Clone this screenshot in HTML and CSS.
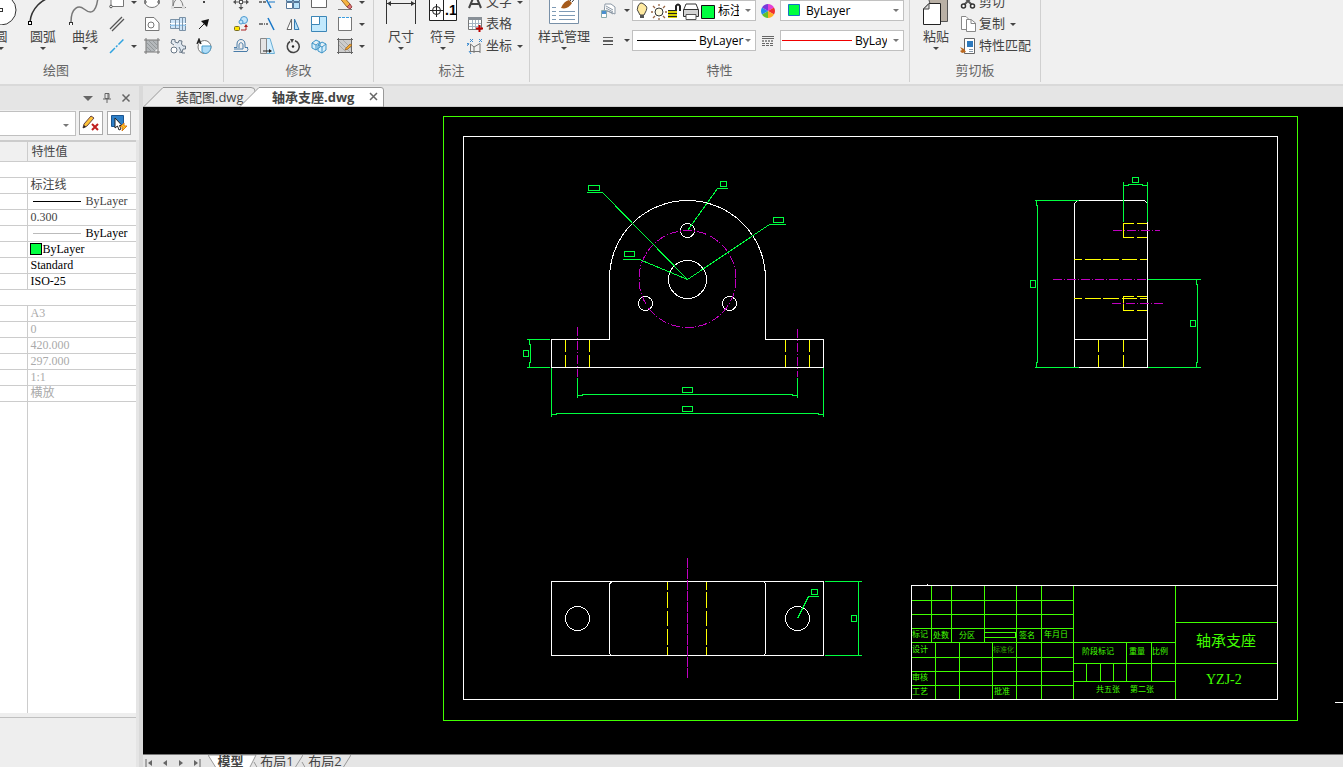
FILE: index.html
```html
<!DOCTYPE html>
<html lang="zh-CN">
<head>
    <meta charset="UTF-8">
    <title>轴承支座.dwg</title>
    <link rel="stylesheet" href="styles.css">
</head>
<body>
    <header class="ribbon">
        <section class="group group-draw">
            <div class="tools">
                <button class="big"><svg width="42" height="34" viewBox="0 0 42 34"><circle cx="21" cy="19" r="15" fill="#fff" stroke="#333"/><rect x="19.500" y="17.500" width="3" height="3" fill="#fff" stroke="#333"/></svg><span>圆</span><i class="arrow"></i></button>
                <button class="big"><svg width="42" height="34" viewBox="0 0 42 34"><path d="M8 31C9 18 20 7 32 6" fill="none" stroke="#333" stroke-width="1.500"/><rect x="6.500" y="30.500" width="3" height="3" fill="#fff" stroke="#000"/></svg><span>圆弧</span><i class="arrow"></i></button>
                <button class="big"><svg width="42" height="34" viewBox="0 0 42 34"><path d="M7 31C7 16 15 14 20 18S32 25 34 6" fill="none" stroke="#777" stroke-width="1.500"/><rect x="5.500" y="31.500" width="3" height="3" fill="#fff" stroke="#333"/></svg><span>曲线</span><i class="arrow"></i></button>
                <div class="icons icons-draw">
                    <button aria-label="矩形"><svg class="ico" viewBox="0 0 16 16"><path d="M2 2H14.500V12.500H2Z" fill="#fff" stroke="#777"/><circle cx="2" cy="12.500" r="1.300" fill="#fff" stroke="#555"/></svg></button>
                    <i class="arrow"></i>
                    <button aria-label="椭圆"><svg class="ico" viewBox="0 0 16 16"><ellipse cx="8" cy="8" rx="7" ry="5.500" fill="#fff" stroke="#777"/><path d="M0 7h2v2H0zM14 7h2v2h-2z" fill="#fff" stroke="#555"/></svg></button>
                    <button aria-label="圆锥"><svg class="ico" viewBox="0 0 16 16"><path d="M3 1V13.500H16M3 13.500C3 8 6 5 8 5S13 8 13 13.500" fill="none" stroke="#777"/><path d="M1 12h3v3H1zM12 12h3v3h-3z" fill="#ddd" stroke="none"/></svg></button>
                    <button aria-label="点"><svg class="ico" viewBox="0 0 16 16"><path d="M7 7h2v2H7z" fill="#444"/></svg></button>
                    <button aria-label="双线"><svg class="ico" viewBox="0 0 16 16"><path d="M1 13L13 1M3 15L15 3" stroke="#555" stroke-width="1.300"/></svg></button>
                    <i></i>
                    <button aria-label="面域"><svg class="ico" viewBox="0 0 16 16"><path d="M1.500 1.500H10L15 7V14.500H1.500Z" fill="#fff" stroke="#777"/><circle cx="7" cy="9" r="3" fill="#fff" stroke="#777"/></svg></button>
                    <button aria-label="轴"><svg class="ico" viewBox="0 0 16 16"><path d="M.5 3.500H9.500V1.500H15.500V14.500H9.500V12.500H.5Z" fill="#cfe5f8" stroke="#7b92a7"/><path d="M0 7.500H16" stroke="#fff"/><path d="M0 9.500H16" stroke="#8fc6ee"/><path d="M5.500 4V12M9.500 2V14M12.500 2V14" stroke="#7b92a7"/></svg></button>
                    <button aria-label="箭头"><svg class="ico" viewBox="0 0 16 16"><path d="M3 13L9 7" stroke="#222"/><path d="M13 3L11 11 5 5Z" fill="#111"/></svg></button>
                    <button aria-label="中心线"><svg class="ico" viewBox="0 0 16 16"><path d="M1 15L15 1" stroke="#2fa3e0" stroke-width="1.500" stroke-dasharray="7 1.500 2 1.500"/></svg></button>
                    <i class="arrow"></i>
                    <button aria-label="填充"><svg class="ico" viewBox="0 0 16 16"><path d="M2 2H14V10L10 14H2Z" fill="#b4b8bb"/><path d="M2 0V16M14 0V16M0 2H16M0 14H16" stroke="#777"/><path d="M3 5L11 13M5 3L13 11M3 9L7 13M9 3L13 7" stroke="#85898d" stroke-width=".7"/></svg></button>
                    <button aria-label="齿轮"><svg class="ico" viewBox="0 0 16 16"><path d="M2 1.500H5V4L8 5 9 2.500 12 3 11.500 6 13 8H15.500V11H13L12 14.500 9 14M2 1.500L1 5 4 7" fill="#dfe7ef" stroke="#687786"/><circle cx="4" cy="12" r="3" fill="#fff" stroke="#687786"/><path d="M9 9l3 6h3" fill="none" stroke="#687786"/></svg></button>
                    <button aria-label="局部放大"><svg class="ico" viewBox="0 0 16 16"><circle cx="8.500" cy="9" r="6.500" fill="#fff" stroke="#777"/><path d="M6 8H15C15 13 12 15.500 9 15.500L6 14Z" fill="#aedcf8" stroke="#4a9cc9"/><path d="M1 6L3 1 5 6M2 4H4" fill="none" stroke="#222" stroke-width="1.300"/></svg></button>
                </div>
            </div>
            <h2>绘图</h2>
        </section>

        <section class="group group-modify">
            <div class="tools">
                <div class="icons icons-modify">
                    <button aria-label="移动"><svg class="ico" viewBox="0 0 16 16"><path d="M8 0l2.500 3h-5zM8 16l2.500-3h-5zM0 8l3-2.500v5zM16 8l-3-2.500v5z" fill="#555"/><path d="M8 3V6M8 10V13M3 8H6M10 8H13" stroke="#555"/><rect x="6.500" y="6.500" width="3" height="3" fill="#fff" stroke="#555"/></svg></button>
                    <button aria-label="修剪"><svg class="ico" viewBox="0 0 16 16"><path d="M0 8H8" stroke="#555" stroke-width="1.500" stroke-dasharray="3 1"/><path d="M5 1L12 14" stroke="#1978c8" stroke-width="1.500"/><path d="M10 8H16" stroke="#1978c8"/></svg></button>
                    <button aria-label="阵列"><svg class="ico" viewBox="0 0 16 16"><path d="M1.500 1.500h6v6h-6zM8.500 1.500h6v6h-6zM8.500 8.500h6v6h-6z" fill="#b8e2fa" stroke="#579"/><path d="M1.500 8.500h6v6h-6z" fill="#fff" stroke="#579"/></svg></button>
                    <button aria-label="拉伸"><svg class="ico" viewBox="0 0 16 16"><path d="M.5 1.500H15.500V13.500H.5Z" fill="#fff" stroke="#666"/></svg></button>
                    <button aria-label="删除"><svg class="ico" viewBox="0 0 16 16"><path d="M1 2L4 0 13 10 10 13Z" fill="#f5b342" stroke="#9a672a"/><path d="M10 13L13 10 15 13 13 15Z" fill="#d77" stroke="#944"/><path d="M1 15.500H15" stroke="#777"/></svg></button>
                    <i class="arrow"></i>
                    <button aria-label="复制"><svg class="ico" viewBox="0 0 16 16"><circle cx="11" cy="4" r="3.500" fill="#c5e6fa" stroke="#4a98d0"/><circle cx="8" cy="6" r="2" fill="#c5e6fa" stroke="#4a98d0"/><rect x="1.500" y="10.500" width="5" height="4" rx="1" fill="#ffe500" stroke="#776b22"/><path d="M8 14H13V10" fill="none" stroke="#a22"/><path d="M11 11l2-3 2 3z" fill="#a22"/></svg></button>
                    <button aria-label="延伸"><svg class="ico" viewBox="0 0 16 16"><path d="M0 8H9" stroke="#555" stroke-width="1.500" stroke-dasharray="4 1 1 1"/><path d="M9 2L15 14" stroke="#1978c8" stroke-width="1.500"/></svg></button>
                    <button aria-label="镜像"><svg class="ico" viewBox="0 0 16 16"><path d="M6.500 3V13.500H2Z" fill="#fff" stroke="#666"/><path d="M9.500 3V13.500H14Z" fill="#b8e2fa" stroke="#347ab0"/></svg></button>
                    <button aria-label="缩放"><svg class="ico" viewBox="0 0 16 16"><path d="M.5 .5H15.500V15.500H.5Z" fill="#c2e9fd" stroke="#3c86b7"/><path d="M.5 .5H8.500V8.500H.5Z" fill="#fff" stroke="#3c86b7"/></svg></button>
                    <button aria-label="打断"><svg class="ico" viewBox="0 0 16 16"><path d="M1 1.500H15V14.500H1Z" fill="#fff"/><path d="M1 1.500H15" stroke="#3c9ee0" stroke-dasharray="3 1"/><path d="M1.500 1V14.500H14.500V1" fill="none" stroke="#777"/></svg></button>
                    <i class="arrow"></i>
                    <button aria-label="偏移"><svg class="ico" viewBox="0 0 16 16"><path d="M1 9.500H4V6C4 0 12 0 12 6V9.500H15M.5 13.500H14Q16 11 14 9.500M6 10V7C6 4 10 4 10 7V11H1" fill="none" stroke="#4a7ca8"/></svg></button>
                    <button aria-label="拉长"><svg class="ico" viewBox="0 0 16 16"><path d="M7 .5H11L15.500 15.500H7Z" fill="#d3efff" stroke="#6aaed4"/><path d="M1.500 .5H7.500V15.500H1.500Z" fill="#e4e4e4" stroke="#888"/><path d="M4 13H11" stroke="#222"/><path d="M10 11l3 2-3 2z" fill="#222"/></svg></button>
                    <button aria-label="旋转"><svg class="ico" viewBox="0 0 16 16"><path d="M5 3.500A6 6 0 1 0 10 2.800" fill="none" stroke="#444" stroke-width="1.500"/><path d="M5 1H9L7 5Z" fill="#444"/><circle cx="8" cy="8.500" r="1.200" fill="#222"/></svg></button>
                    <button aria-label="块"><svg class="ico" viewBox="0 0 16 16"><path d="M1 5l4-3 4 2v5l-4 3-4-2zM7 7l4-3 4 2v6l-4 3-4-2zM1 5l4 2 4-3M7 7l4 2 4-3M5 7v5M11 9v6" fill="#d5effd" stroke="#3e93c6"/></svg></button>
                    <button aria-label="填充编辑"><svg class="ico" viewBox="0 0 16 16"><path d="M2 2H14V14H2Z" fill="#ccc"/><path d="M1.500 0V16M14.500 0V16M0 1.500H16M0 14.500H16" stroke="#666"/><path d="M2 7L9 14M2 3L13 14M6 2L14 10" stroke="#999" stroke-width=".7"/><path d="M9 10l4-4 2 1-4 4-3 1z" fill="#f0a830" stroke="#965b1c" stroke-width=".7"/></svg></button>
                    <i class="arrow"></i>
                </div>
            </div>
            <h2>修改</h2>
        </section>

        <section class="group group-note">
            <div class="tools">
                <button class="big"><svg width="42" height="34" viewBox="0 0 42 34"><path d="M6.500 0V33M35.500 0V33M7 12.500H35" stroke="#333" fill="none"/><path d="M7 12.500l4-2.500v5zM35 12.500l-4-2.500v5z" fill="#333"/></svg><span>尺寸</span><i class="arrow"></i></button>
                <button class="big"><svg width="42" height="34" viewBox="0 0 42 34"><path d="M7.500 4H34.500V29.500H7.500ZM21.500 4V30" fill="#fff" stroke="#222"/><circle cx="14.500" cy="19.500" r="4" fill="none" stroke="#222"/><path d="M8 19.500H21M14.500 13V26" stroke="#222"/><text x="23" y="24" class="tenth">.1</text></svg><span>符号</span><i class="arrow"></i></button>
                <div class="rows">
                    <button><svg class="ico" viewBox="0 0 16 16"><path d="M2 14L7 2H9L14 14M4 10H12" fill="none" stroke="#444" stroke-width="2"/></svg><span>文字</span><i class="arrow"></i></button>
                    <button><svg class="ico" viewBox="0 0 16 16"><path d="M1.500 1.500H14.500V13.500H1.500Z" fill="#fff" stroke="#777"/><path d="M1 1H15V4H1Z" fill="#888f96"/><path d="M2 7.500H14M2 10.500H14M5.500 4V13M8.500 4V13M11.500 4V13" stroke="#a5b5c5"/><path d="M12.500 9V16M9 12.500H16" stroke="#b00" stroke-width="2"/></svg><span>表格</span></button>
                    <button><svg class="ico" viewBox="0 0 16 16"><path d="M3.500 6V13.500M3.500 6L7 9 13 5.500V15M7 9V15M3 13.500H13" stroke="#777" fill="none"/><path d="M3 1l3 3M6 1L3 4M12 1l3 3M15 1l-3 3M0 5l2 2M0 8l2-3M2 13l2 3" stroke="#3c8bd0"/></svg><span>坐标</span><i class="arrow"></i></button>
                </div>
            </div>
            <h2>标注</h2>
        </section>

        <section class="group group-props">
            <div class="tools">
                <button class="big wide"><svg width="42" height="34" viewBox="0 0 42 34"><path d="M6.500 2H35.500V32.500H6.500Z" fill="#fff" stroke="#7890a8"/><path d="M9 16.500H13M9 20.500H13M9 24.500H13M9 28.500H13M16 20.500H32M16 24.500H32M16 28.500H32" stroke="#7d9ab5"/><path d="M18 17Q21 10 26 9L29 12Q25 19 18 17Z" fill="#a65b1c"/><path d="M27 10L34 2M29 11L35 4" stroke="#333"/></svg><span>样式管理</span><i class="arrow"></i></button>
                <div class="fields">
                    <button class="drop" aria-label="图层"><svg class="ico" viewBox="0 0 16 16"><path d="M5 1H11L15 4V11L8 8 4 10Z" fill="#fff" stroke="#8b98a5"/><path d="M6 3l7 4M6 5l7 4M6 7l7 4" stroke="#8b98a5"/><path d="M1.500 7.500H6.500V14.500H1.500Z" fill="#fff" stroke="#8aa"/><path d="M2 8h4v3H2z" fill="#4a8fd0"/></svg><i class="arrow"></i></button>
                    <div class="combo combo-layer">
                        <select aria-label="当前图层"><option>标注线</option></select>
                        <svg class="over" width="82" height="20" viewBox="0 0 82 20"><path d="M6 12Q3 9 5 5T9 2 13 5 12 12L11 14H7Z" fill="#ffeaa0" stroke="#444"/><path d="M7 14h4v3H7z" fill="#555"/><circle cx="26" cy="11" r="4" fill="#fffbe0" stroke="#333"/><path d="M26 3V5M26 17V19M18 11H20M32 11H34M20 5l2 2M32 5l-2 2M20 17l2-2M32 17l-2-2" stroke="#964" stroke-width="1.300"/><path d="M35 9H44V17H35Z" fill="#d8d000"/><path d="M35 9.500H44M35 12.500H44M35 15.500H44" stroke="#222"/><path d="M43 10V5Q45 2 47 5V10" fill="none" stroke="#222" stroke-width="2"/><path d="M53 3H63L65 8V12H51V8Z" fill="#fff" stroke="#333"/><path d="M50.500 8.500H65.500V15.500H50.500Z" fill="#d4d4d4" stroke="#333"/><path d="M53 13.500H63V18.500H53Z" fill="#fff" stroke="#555"/><path d="M68.500 4.500H81.500V17.500H68.500Z" fill="#00ff40" stroke="#111"/></svg>
                        <i class="arrow"></i>
                    </div>
                    <svg class="ico mid" viewBox="0 0 16 16"><g transform="translate(8 8)"><path d="M0 0V-7A7 7 0 0 1 6-3.500Z" fill="#e33fd5"/><path d="M0 0L6-3.500A7 7 0 0 1 6 3.500Z" fill="#ef3030"/><path d="M0 0L6 3.500A7 7 0 0 1 0 7Z" fill="#ffad24"/><path d="M0 0V7A7 7 0 0 1-6 3.500Z" fill="#65c22d"/><path d="M0 0L-6 3.500A7 7 0 0 1-6-3.500Z" fill="#218bef"/><path d="M0 0L-6-3.500A7 7 0 0 1 0-7Z" fill="#7a38da"/></g></svg>
                    <div class="combo combo-color">
                        <select aria-label="颜色"><option>ByLayer</option></select>
                        <svg class="over" width="22" height="20" viewBox="0 0 22 20"><path d="M7.500 3.500H18.500V14.500H7.500Z" fill="#00ff40" stroke="#1672c4"/></svg>
                        <i class="arrow"></i>
                    </div>
                    <button class="drop" aria-label="线型"><svg class="ico" viewBox="0 0 16 16"><path d="M3 4.500H13" stroke="#666"/><path d="M3 8H13" stroke="#333" stroke-width="1.500"/><path d="M3 11.500H13" stroke="#444" stroke-width="1"/></svg><i class="arrow"></i></button>
                    <div class="combo combo-line">
                        <select aria-label="当前线型"><option>ByLayer</option></select>
                        <svg class="over" width="64" height="20" viewBox="0 0 64 20"><path d="M4 9.500H63" stroke="#000"/></svg>
                        <i class="arrow"></i>
                    </div>
                    <svg class="ico mid" viewBox="0 0 16 16"><path d="M2 3.500H14M2 5.500H14" stroke="#666"/><path d="M2 8H14" stroke="#333" stroke-dasharray="2 1"/><path d="M2 10.500H14M2 12.500H14" stroke="#666" stroke-dasharray="3 1"/></svg>
                    <div class="combo combo-weight">
                        <select aria-label="线宽"><option>ByLayer</option></select>
                        <svg class="over" width="74" height="20" viewBox="0 0 74 20"><path d="M1 9.500H71" stroke="#f00000"/></svg>
                        <i class="arrow"></i>
                    </div>
                </div>
            </div>
            <h2>特性</h2>
        </section>

        <section class="group group-clip">
            <div class="tools">
                <button class="big"><svg width="42" height="34" viewBox="0 0 42 34"><path d="M12 2H32.500V30.500H20Z" fill="#b9b0a5" stroke="#555"/><path d="M14 12.500H25.500V33.500H8.500V18Z" fill="#fff" stroke="#222"/><path d="M8.500 18H14V12.500Z" fill="#ddd" stroke="#444"/></svg><span>粘贴</span><i class="arrow"></i></button>
                <div class="rows">
                    <button><svg class="ico" viewBox="0 0 16 16"><path d="M4 3L12 11M12 3L4 11" stroke="#555" stroke-width="2"/><circle cx="3.500" cy="12" r="2" fill="#fff" stroke="#333" stroke-width="1.500"/><circle cx="12.500" cy="12" r="2" fill="#fff" stroke="#333" stroke-width="1.500"/></svg><span>剪切</span></button>
                    <button><svg class="ico" viewBox="0 0 16 16"><path d="M1.500 .5H6L9.500 4V13.500H1.500Z" fill="#fff" stroke="#888"/><path d="M6.500 3.500H11L15.500 7V15.500H6.500Z" fill="#fff" stroke="#888"/><path d="M11 3.500V7.500H15" fill="none" stroke="#888"/></svg><span>复制</span><i class="arrow"></i></button>
                    <button><svg class="ico" viewBox="0 0 16 16"><path d="M4.500 .5H14.500V15.500H4.500Z" fill="#fff" stroke="#666"/><path d="M7 3H13V9H7Z" fill="#2c79bd"/><path d="M9 11.500H13M9 13.500H13" stroke="#89a"/><path d="M0 9L4 11 6 14 2 15 0 13 2 12Z" fill="#bb681f"/></svg><span>特性匹配</span></button>
                </div>
            </div>
            <h2>剪切板</h2>
        </section>
    </header>

    <main class="work">
        <aside class="panel">
            <div class="panel-head">
                <button aria-label="菜单"><svg width="10" height="10" viewBox="0 0 10 10"><path d="M0 3H10L5 8Z" fill="#666"/></svg></button>
                <button aria-label="固定"><svg width="10" height="10" viewBox="0 0 10 10"><path d="M3 .5H7V5.500H3ZM1 6H9M5 6V10M6 1V5" fill="none" stroke="#666"/></svg></button>
                <button aria-label="关闭"><svg width="10" height="10" viewBox="0 0 10 10"><path d="M1.500 1.500L8.500 8.500M8.500 1.500L1.500 8.500" stroke="#666" stroke-width="1.500"/></svg></button>
            </div>
            <div class="panel-bar">
                <div class="combo combo-object">
                    <select aria-label="对象"><option></option></select>
                    <i class="arrow"></i>
                </div>
                <button class="square" aria-label="清除选择"><svg width="18" height="18" viewBox="0 0 18 18"><path d="M1 14L2 10 9 2 12 4 5 12Z" fill="#ffc338" stroke="#644" stroke-width="1"/><path d="M1 14l1-3 2 2z" fill="#222"/><path d="M10 10L16 16M16 10L10 16" stroke="#c02020" stroke-width="2"/></svg></button>
                <button class="square" aria-label="快速选择"><svg width="18" height="18" viewBox="0 0 18 18"><path d="M1.500 1.500H13.500V12.500H1.500Z" fill="#2d7fc7" stroke="#1b5590"/><path d="M5 4V14L7.500 12 9 16 11 15 9.500 11.500H12Z" fill="#fff" stroke="#222"/><path d="M14 9L10 13H13L12 17 17 12H14Z" fill="#ffcb27" stroke="#d97b16"/></svg></button>
            </div>
            <table class="props">
                <thead>
                    <tr><th></th><th>特性值</th></tr>
                </thead>
                <tbody>
                    <tr><td colspan="2"></td></tr>
                    <tr><td></td><td>标注线</td></tr>
                    <tr><td></td><td><span class="line"><i class="stroke"></i>ByLayer</span></td></tr>
                    <tr><td></td><td>0.300</td></tr>
                    <tr class="strong"><td></td><td><span class="line"><i class="stroke thin"></i>ByLayer</span></td></tr>
                    <tr class="strong"><td></td><td><span class="line"><i class="swatch"></i>ByLayer</span></td></tr>
                    <tr class="strong"><td></td><td>Standard</td></tr>
                    <tr class="strong"><td></td><td>ISO-25</td></tr>
                    <tr><td colspan="2"></td></tr>
                    <tr class="off"><td></td><td>A3</td></tr>
                    <tr class="off"><td></td><td>0</td></tr>
                    <tr class="off"><td></td><td>420.000</td></tr>
                    <tr class="off"><td></td><td>297.000</td></tr>
                    <tr class="off"><td></td><td>1:1</td></tr>
                    <tr class="off"><td></td><td>横放</td></tr>
                </tbody>
            </table>
            <div class="props-rest"></div>
            <div class="panel-foot"></div>
        </aside>

        <section class="editor">
            <nav class="files">
                <button class="file"><svg class="shape" width="112" height="20" viewBox="0 0 112 20"><path d="M.5 20L20 .5H108Q112 .5 112 4V20Z" fill="#eee" stroke="#999"/></svg><span>装配图.dwg</span></button>
                <button class="file current"><svg class="shape" width="145" height="20" viewBox="0 0 145 20"><path d="M.5 20L20 .5H142Q144.500 .5 144.500 3V20Z" fill="#fff" stroke="#999"/></svg><span>轴承支座.dwg</span><svg width="9" height="9" viewBox="0 0 9 9"><path d="M1 1L8 8M8 1L1 8" stroke="#666" stroke-width="1.500"/></svg></button>
            </nav>

            <div class="canvas">
                <svg class="sheet" viewBox="143 107 1200 647" preserveAspectRatio="xMinYMin slice">
                    <!-- 图框 -->
                    <rect class="lime" x="443.500" y="116.500" width="854" height="604"/>
                    <rect class="white" x="463.500" y="136.500" width="814" height="563"/>

                    <!-- 主视图 -->
                    <g class="hidden">
                        <path d="M565.500 340V352M565.500 355V367M589.500 340V352M589.500 355V367M785.500 340V352M785.500 355V367M809.500 340V352M809.500 355V367"/>
                    </g>
                    <g class="white">
                        <path d="M551.500 367.500V339.500H609.500V278.500A78 78 0 0 1 765.500 278.500V339.500H823.500V367.500Z"/>
                        <circle cx="687.500" cy="279.500" r="19"/>
                        <circle cx="687.500" cy="230.500" r="7"/>
                        <circle cx="645.500" cy="303.500" r="7"/>
                        <circle cx="729.500" cy="303.500" r="7"/>
                    </g>
                    <g class="center">
                        <circle cx="687.500" cy="279" r="48.500"/>
                        <path d="M577.500 327V377M797.500 329V377"/>
                    </g>
                    <g class="dim">
                        <path d="M577.500 378V398M797.500 378V398M577.500 395.500H582.500V394.500H792.500V395.500H797.500"/>
                        <path d="M551.500 368V417M823.500 368V417M551.500 414.500H556.500V413.500H818.500V414.500H823.500"/>
                        <path d="M527 339.500H550M527 367.500H550M529.500 340V344.500H530.500V362.500H529.500V367"/>
                        <path d="M687.500 279.500L602.500 192.500H587M687.500 230.500L717.500 188.500H728M687.500 279.500L769.500 224.500H786M687.500 279.500L639.500 259.500H623"/>
                        <path d="M682.500 387.500h10v5h-10zM682.500 406.500h10v5h-10zM523.500 350.500h5v6h-5zM588.500 185.500h11v5h-11zM720.500 181.500h6v5h-6zM773.500 217.500h10v5h-10zM624.500 251.500h10v5h-10z"/>
                    </g>

                    <!-- 侧视图 -->
                    <g class="white">
                        <path d="M1074.500 367.500V203.500L1077.500 200.500H1144.500L1147.500 203.500V367.500ZM1074.500 339.500H1147.500"/>
                    </g>
                    <g class="hidden">
                        <path d="M1134 223.500H1123.500V237.500H1134M1137 223.500H1147M1137 237.500H1147M1134 296.500H1123.500V310.500H1134M1137 296.500H1147M1137 310.500H1147"/>
                        <path d="M1074 259.500H1082M1085 259.500H1101M1103 259.500H1119M1122 259.500H1137M1140 259.500H1147M1074 298.500H1082M1085 298.500H1101M1103 298.500H1119M1122 298.500H1137M1140 298.500H1147"/>
                        <path d="M1098.500 340V352M1098.500 355V367M1123.500 340V352M1123.500 355V367"/>
                    </g>
                    <g class="center">
                        <path d="M1113 230.500H1160M1053 279.500H1147M1112 303.500H1164"/>
                    </g>
                    <g class="dim">
                        <path d="M1035 200.500H1079M1035 367.500H1079M1036.500 201V205.500H1037.500V362.500H1036.500V367"/>
                        <path d="M1123.500 182V222M1147.500 182V222M1123.500 185.500H1128.500V184.500H1142.500V185.500H1147.500"/>
                        <path d="M1148 279.500H1201M1148 367.500H1201M1196.500 280V284.500H1197.500V362.500H1196.500V367"/>
                        <path d="M1030.500 280.500h5v7h-5zM1132.500 177.500h6v5h-6zM1190.500 320.500h5v6h-5z"/>
                    </g>

                    <!-- 俯视图 -->
                    <g class="hidden">
                        <path d="M667.500 582V590M667.500 592V608M667.500 611V626M667.500 629V645M667.500 647V655M706.500 582V590M706.500 592V608M706.500 611V626M706.500 629V645M706.500 647V655"/>
                    </g>
                    <g class="white">
                        <rect x="551.500" y="581.500" width="272" height="74"/>
                        <path d="M613.500 581.500Q609.500 581.500 609.500 585.500V651.500Q609.500 655.500 613.500 655.500M761.500 581.500Q765.500 581.500 765.500 585.500V651.500Q765.500 655.500 761.500 655.500"/>
                        <circle cx="577.500" cy="618.500" r="12"/>
                        <circle cx="797.500" cy="618.500" r="12"/>
                    </g>
                    <path class="center long" d="M687.500 558V679"/>
                    <g class="dim">
                        <path d="M825 581.500H862M825 655.500H862M858.500 582V655M797.500 618.500L808.500 596.500H819"/>
                        <path d="M851.500 615.500h5v6h-5zM811.500 589.500h6v5h-6z"/>
                    </g>

                    <!-- 标题栏 -->
                    <g class="lime">
                        <path d="M912 600.500H1073M912 614.500H1073M912 628.500H1073M912 642.500H1175M912 657.500H1073M912 671.500H1073M912 685.500H1073"/>
                        <path d="M931.500 586V642M951.500 586V642M984.500 586V642M1016.500 586V699M1041.500 586V699M1073.500 586V699M935.500 642V699M959.500 642V699M992.500 642V699"/>
                        <path d="M984.500 632.500H1015.500V637.500H984.500M1175.500 586V699M1176 622.500H1277M1074 663.500H1277M1074 681.500H1175M1126.500 642V681M1151.500 642V681M1086.500 664V681M1100.500 664V681M1113.500 664V681"/>
                    </g>
                    <path class="white" d="M911.500 699V585.500H1277M927.500 584V585M1335 702.500H1343"/>
                    <g class="label">
                        <text x="912" y="637">标记</text>
                        <text x="933" y="638">处数</text>
                        <text x="959" y="638">分区</text>
                        <text x="1019" y="638">签名</text>
                        <text x="1044" y="637">年月日</text>
                        <text x="912" y="652">设计</text>
                        <text x="993" y="652" class="faint">标准化</text>
                        <text x="912" y="680">审核</text>
                        <text x="912" y="694">工艺</text>
                        <text x="994" y="694">批准</text>
                        <text x="1082" y="654">阶段标记</text>
                        <text x="1129" y="654">重量</text>
                        <text x="1152" y="654">比例</text>
                        <text x="1096" y="692">共五张</text>
                        <text x="1130" y="692">第二张</text>
                        <text x="1196" y="646" class="name">轴承支座</text>
                        <text x="1206" y="684" class="code">YZJ-2</text>
                    </g>
                </svg>
            </div>

            <nav class="layouts">
                <div class="pager">
                    <button aria-label="第一个"><svg width="8" height="8" viewBox="0 0 8 8"><path d="M1 0V8" stroke="#666"/><path d="M7 1V7L3 4Z" fill="#666"/></svg></button>
                    <button aria-label="上一个"><svg width="8" height="8" viewBox="0 0 8 8"><path d="M6 1V7L2 4Z" fill="#666"/></svg></button>
                    <button aria-label="下一个"><svg width="8" height="8" viewBox="0 0 8 8"><path d="M2 1V7L6 4Z" fill="#666"/></svg></button>
                    <button aria-label="最后一个"><svg width="8" height="8" viewBox="0 0 8 8"><path d="M7 0V8" stroke="#666"/><path d="M1 1V7L5 4Z" fill="#666"/></svg></button>
                </div>
                <button class="layout current"><svg class="shape" width="50" height="16" viewBox="0 0 50 16"><path d="M0 0L10 16H40L48 0Z" fill="#fff" stroke="#999"/></svg><span>模型</span></button>
                <button class="layout"><svg class="shape" width="50" height="16" viewBox="0 0 50 16"><path d="M1 7L5 14M40 16L50 0" fill="none" stroke="#999"/></svg><span>布局1</span></button>
                <button class="layout"><svg class="shape" width="50" height="16" viewBox="0 0 50 16"><path d="M1 7L5 14M40 16L50 0" fill="none" stroke="#999"/></svg><span>布局2</span></button>
            </nav>
        </section>
    </main>
</body>
</html>
```
FILE: styles.css
```css
*{
    box-sizing: border-box;
}
body{
    margin: 0;
    height: 100vh;
    display: flex;
    flex-direction: column;
    overflow: hidden;
    background: #e5e5e5;
    color: #444;
    font: 13px "Open Sans","Noto Sans CJK SC",sans-serif;
}
button{
    margin: 0;
    padding: 0;
    border: 0;
    background: none;
    color: inherit;
    font: inherit;
    white-space: nowrap;
}
svg{
    display: block;
    flex: none;
}
.ico{
    width: 16px;
    height: 16px;
}
.arrow{
    flex: none;
    width: 0;
    height: 0;
    border: 3px solid transparent;
    border-top-color: #444;
    border-bottom: 0;
}

/* 功能区 */
.ribbon{
    flex: none;
    height: 86px;
    display: flex;
    overflow: hidden;
    background: #f0f0f0;
    border-bottom: 2px solid #d9d9d9;
}
.group{
    flex: none;
    display: flex;
    flex-direction: column;
    justify-content: flex-end;
    padding-bottom: 3px;
    height: 82px;
    border-right: 1px solid #d0d0d0;
}
.group h2{
    margin: 0;
    line-height: 17px;
    font-size: 13px;
    font-weight: normal;
    text-align: center;
    color: #666;
}
/* 第一组左侧超出窗口 */
.group-draw{
    width: 335px;
    margin-left: -111px;
}
.group-modify{
    width: 150px;
}
.group-note{
    width: 156px;
}
.group-props{
    width: 380px;
}
.group-clip{
    width: 131px;
}
.tools{
    display: flex;
    align-items: flex-end;
    padding: 0 5px 5px;
}
.group-draw .tools{
    justify-content: flex-end;
    padding-right: 6px;
}
.group-modify .tools{
    padding-left: 4px;
}
.group-note .tools{
    padding-left: 6px;
}
.big{
    flex: none;
    width: 42px;
    display: flex;
    flex-direction: column;
    align-items: center;
    height: 66px;
}
.big span{
    line-height: 22px;
}
.wide{
    width: 58px;
}
.icons{
    display: grid;
    grid-auto-rows: 22px;
    align-items: center;
    justify-items: center;
}
.icons-draw{
    grid-template-columns: 22px 11px 26px 26px 26px;
}
.icons-modify{
    grid-template-columns: repeat(5,26px) 8px;
}
.rows{
    display: grid;
    grid-auto-rows: 22px;
    padding-left: 3px;
}
.rows button{
    display: flex;
    align-items: center;
    gap: 3px;
}
.rows span{
    line-height: 18px;
    padding-bottom: 2px;
}
.rows .arrow{
    margin-left: 2px;
}
.tenth{
    font: bold 14px "Liberation Sans",sans-serif;
}
.fields{
    flex: 1;
    display: grid;
    grid-template-columns: 39px 124px 24px 124px;
    grid-auto-rows: 21px;
    row-gap: 9px;
    padding-bottom: 6px;
    align-items: center;
}
.drop{
    display: flex;
    align-items: center;
    gap: 8px;
    padding-left: 7px;
}
.mid{
    justify-self: center;
}
.combo{
    position: relative;
    height: 21px;
    background: #fff;
    border: 1px solid #c0c0c0;
}
.combo select{
    display: block;
    width: 100%;
    height: 100%;
    padding: 0 16px 0 0;
    border: 0;
    appearance: none;
    background: none;
    color: #000;
    font: 12px "Open Sans","Noto Sans CJK SC",sans-serif;
}
.combo .over{
    position: absolute;
    left: 0;
    top: 0;
    pointer-events: none;
}
.combo .arrow{
    position: absolute;
    right: 4px;
    top: 8px;
    border-top-color: #777;
    pointer-events: none;
}
.combo-layer select{
    padding-left: 85px;
}
.combo-color select{
    padding-left: 25px;
}
.combo-line select{
    padding-left: 66px;
    padding-right: 8px;
}
.combo-weight select{
    padding-left: 74px;
}

/* 特性面板 */
.work{
    flex: 1;
    min-height: 0;
    display: flex;
}
.panel{
    flex: none;
    width: 143px;
    display: flex;
    flex-direction: column;
    border-right: 4px solid #d9d9d9;
}
.panel-head{
    height: 24px;
    display: flex;
    align-items: center;
    justify-content: flex-end;
    gap: 9px;
    padding-right: 8px;
}
.panel-bar{
    display: flex;
    height: 30px;
    gap: 3px;
    padding-top: 1px;
    background: #f0f0f0;
}
.combo-object{
    width: 76px;
    height: 25px;
    border-left: 0;
}
.combo-object .arrow{
    right: 6px;
    top: 12px;
}
.square{
    width: 24px;
    height: 24px;
    display: flex;
    align-items: center;
    justify-content: center;
    background: #fff;
    border: 1px solid #aaa;
}
.square + .square{
    margin-left: 1px;
}
.props{
    width: 136px;
    border-collapse: collapse;
    table-layout: fixed;
    border-top: 2px solid #ccc;
    background: #fff;
    font: 12px "Liberation Serif","Noto Sans CJK SC",serif;
}
.props th,.props td{
    height: 16px;
    padding: 0 0 0 3px;
    border-bottom: 1px solid #ccc;
    line-height: 14px;
    font-weight: normal;
    text-align: left;
}
.props th{
    height: 20px;
    padding: 2px 0 0 4px;
    background: #f0f0f0;
}
.props th:first-child,.props td:first-child:not([colspan]){
    width: 27px;
    border-right: 1px solid #ccc;
}
.strong td{
    color: #000;
}
.off td{
    color: #aaa;
}
.line{
    display: flex;
    align-items: center;
}
.stroke{
    width: 48px;
    height: 1px;
    margin: 0 5px 0 2px;
    background: #000;
}
.thin{
    background: #bbb;
}
.swatch{
    width: 12px;
    height: 12px;
    margin: 0 1px 0 -1px;
    border: 1px solid #000;
    background: #00ff40;
}
.props-rest{
    flex: 1;
    width: 136px;
    background: linear-gradient(90deg,#fff 27px,#ccc 27px,#ccc 28px,#fff 28px);
    border-bottom: 4px solid #eee;
}
.panel-foot{
    height: 50px;
    width: 136px;
    background: #eee;
    border-top: 1px solid #c0c0c0;
}

/* 图纸 */
.editor{
    flex: 1;
    min-width: 0;
    display: flex;
    flex-direction: column;
}
.files{
    height: 21px;
    display: flex;
    padding-top: 1px;
    border-bottom: 1px solid #ccc;
}
.file{
    position: relative;
    width: 96px;
    height: 20px;
    padding: 0 0 2px 33px;
    display: flex;
    align-items: center;
}
.file span{
    position: relative;
}
.current{
    font-weight: bold;
}
.file.current{
    width: 145px;
    padding-right: 6px;
    justify-content: space-between;
}
.file.current svg:last-child{
    position: relative;
}
.shape{
    position: absolute;
    left: 0;
    top: 0;
}
.canvas{
    flex: 1;
    min-height: 0;
    background: #000;
}
.sheet{
    width: 100%;
    height: 100%;
    fill: none;
    shape-rendering: crispEdges;
}
.white{
    stroke: #fff;
}
.lime{
    stroke: #40ff00;
}
.dim{
    stroke: #00ff40;
}
.hidden{
    stroke: #ff0;
}
.center{
    stroke: #c000c0;
    stroke-dasharray: 9 2 1 2;
}
.long{
    stroke-dasharray: 10 1;
}
.label{
    fill: #40ff00;
    font: 8px "Noto Sans CJK SC",sans-serif;
}
.label .faint{
    font-size: 7px;
    fill: #30a000;
}
.label .name{
    font-size: 15px;
}
.label .code{
    font: 14px "Liberation Serif",serif;
}

/* 布局标签 */
.layouts{
    flex: none;
    height: 13px;
    display: flex;
    overflow: hidden;
    border-top: 1px solid #777;
}
.pager{
    width: 65px;
    display: flex;
    gap: 8px;
    padding: 4px 0 0 2px;
}
.layout{
    position: relative;
    flex: none;
    width: 48px;
    height: 12px;
    line-height: 12px;
    font-size: 13px;
}
.layout.current{
    width: 45px;
}
.layout span{
    position: relative;
}
```
